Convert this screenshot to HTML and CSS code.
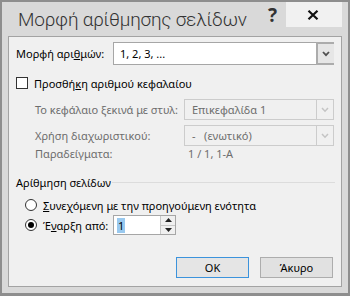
FILE: index.html
```html
<!DOCTYPE html>
<html lang="el">
<head>
<meta charset="utf-8">
<title>Μορφή αρίθμησης σελίδων</title>
<link rel="stylesheet" href="styles.css">
</head>
<body>
<div class="window">
  <div class="titlebar">
    <span class="title">Μορφή αρίθμησης σελίδων</span>
    <span class="help">?</span>
    <span class="close"><svg width="12" height="10" viewBox="0 0 12 10"><path d="M1.5 0.8 L10.5 9.2 M10.5 0.8 L1.5 9.2" stroke="#111" stroke-width="2.2" fill="none"/></svg></span>
  </div>
  <div class="panel">
    <div class="row r-format">
      <span class="lbl">Μορφή αρι<u>θ</u>μών:</span>
      <div class="combo combo-wide">
        <span class="combo-text">1, 2, 3, ...</span>
        <span class="drop"><svg width="8" height="6" viewBox="0 0 8 6"><path d="M1 1 L4 4.2 L7 1" stroke="#505050" stroke-width="1.8" fill="none"/></svg></span>
      </div>
    </div>
    <div class="row r-check">
      <span class="checkbox"></span>
      <span class="lbl">Προσθή<u>κ</u>η αριθμού κεφαλαίου</span>
    </div>
    <div class="row r-sub r-sub1 disabled">
      <span class="sub-lbl">Το κεφάλαιο ξεκινά με στυλ:</span>
      <div class="combo combo-sub">
        <span class="combo-text">Επικεφαλίδα 1</span>
        <span class="drop"><svg width="8" height="6" viewBox="0 0 8 6"><path d="M1 1 L4 4.2 L7 1" stroke="#c4c4c4" stroke-width="1.5" fill="none"/></svg></span>
      </div>
    </div>
    <div class="row r-sub r-sub2 disabled">
      <span class="sub-lbl">Χρήση διαχωριστικού:</span>
      <div class="combo combo-sub">
        <span class="combo-text">-&nbsp;&nbsp;&nbsp;(ενωτικό)</span>
        <span class="drop"><svg width="8" height="6" viewBox="0 0 8 6"><path d="M1 1 L4 4.2 L7 1" stroke="#c4c4c4" stroke-width="1.5" fill="none"/></svg></span>
      </div>
    </div>
    <div class="row r-examples disabled">
      <span class="sub-lbl">Παραδείγματα:</span>
      <span class="example">1 / 1, 1-A</span>
    </div>
    <div class="row r-section">
      <span class="section-title">Αρίθμηση σελίδων</span>
      <span class="section-line"></span>
    </div>
    <div class="row r-radio1">
      <span class="radio"></span>
      <span class="lbl"><u>Σ</u>υνεχόμενη με την προηγούμενη ενότητα</span>
    </div>
    <div class="row r-radio2">
      <span class="radio checked"></span>
      <span class="lbl radio-lbl">Έ<u>ν</u>αρξη από:</span>
      <div class="spinner">
        <span class="spin-text"><span class="sel">1</span></span>
        <span class="spin-btns">
          <span class="spin-up"><svg width="7" height="4" viewBox="0 0 7 4"><path d="M0 4 L3.5 0 L7 4 Z" fill="#222"/></svg></span>
          <span class="spin-down"><svg width="7" height="4" viewBox="0 0 7 4"><path d="M0 0 L3.5 4 L7 0 Z" fill="#222"/></svg></span>
        </span>
      </div>
    </div>
    <div class="row r-buttons">
      <span class="btn btn-ok">OK</span>
      <span class="btn">Άκυρο</span>
    </div>
  </div>
</div>
</body>
</html>
```
FILE: styles.css
```css
* { box-sizing: border-box; }
html, body { margin: 0; padding: 0; background: #d9d9d9; }
body {
  font-family: "Noto Sans", "Open Sans", "DejaVu Sans", sans-serif;
  font-size: 11px;
  color: #000;
}
.window {
  width: 350px;
  height: 296px;
  background: #d9d9d9;
  border: 2px solid #8e8e8e;
  border-bottom-width: 3px;
  padding: 0 6px 6px 6px;
  display: flex;
  flex-direction: column;
  white-space: nowrap;
}
.titlebar {
  height: 34px;
  display: flex;
  align-items: flex-start;
}
.title {
  font-family: Roboto, "Noto Sans", sans-serif;
  font-weight: 300;
  font-size: 19px;
  letter-spacing: -0.2px;
  color: #333;
  margin-left: 10px;
  margin-top: 5px;
  line-height: 26px;
}
.help {
  font-family: "Noto Sans", sans-serif;
  font-weight: 700;
  font-size: 19px;
  color: #333;
  margin-left: auto;
  margin-right: 9px;
  line-height: 26px;
}
.close {
  width: 56px;
  height: 25px;
  background: #f1f1f1;
  display: flex;
  align-items: center;
  justify-content: center;
  padding-right: 3px;
}
.close svg { display: block; }
.panel {
  flex: 1;
  background: #f0f0f0;
  border: 1px solid #a3a3a3;
  padding: 5px 7px 0 7px;
  display: flex;
  flex-direction: column;
}
.row { display: flex; align-items: center; }
.row > * { flex-shrink: 0; }
u { text-decoration: underline; text-underline-offset: 1px; }
.r-format { height: 23px; }
.r-format .lbl { width: 97px; }
.combo {
  display: flex;
  align-items: stretch;
  background: #fff;
  border: 1px solid #a6a6a6;
  height: 100%;
}
.combo-wide { width: 221px; }
.combo-text { flex: 1; padding-left: 6px; display: flex; align-items: center; }
.drop {
  width: 17px;
  border-left: 1px solid #a6a6a6;
  background: #e6e6e6;
  display: flex;
  align-items: center;
  justify-content: center;
}
.combo-wide .drop { border: 2px solid #acacac; border-right: none; margin: -1px -1px -1px 0; width: 18px; }
.drop svg { display: block; }
.r-check { height: 16px; margin-top: 10px; }
.checkbox {
  width: 12px; height: 12px;
  border: 1px solid #333;
  background: #fff;
  margin-right: 6px;
}
.r-sub { height: 21px; padding-left: 19px; }
.r-sub1 { margin-top: 8px; }
.r-sub2 { margin-top: 5px; }
.disabled { color: #6d6d6d; }
.sub-lbl { width: 149px; }
.combo-sub { width: 150px; background: #f0f0f0; border-color: #cccccc; }
.combo-sub .combo-text { padding-left: 7px; }
.combo-sub .drop { background: #f0f0f0; border-left-color: #cccccc; }
.r-examples { height: 14px; padding-left: 19px; }
.example { padding-left: 4px; }
.r-section { height: 16px; margin-top: 14px; }
.section-title { width: 96px; }
.section-line { flex: 1 1 auto !important; height: 1px; background: #dcdcdc; margin-right: -1px; }
.radio {
  width: 12px; height: 12px;
  border: 1px solid #333;
  border-radius: 50%;
  background: #fff;
  margin-left: 9px;
  margin-right: 6px;
  display: flex;
  align-items: center;
  justify-content: center;
}
.radio.checked::after {
  content: "";
  width: 6px; height: 6px;
  border-radius: 50%;
  background: #000;
}
.r-radio1 { height: 16px; margin-top: 7px; }
.r-radio2 { height: 20px; margin-top: 2px; }
.radio-lbl { width: 70px; }
.spinner {
  width: 63px;
  height: 20px;
  display: flex;
  border: 1px solid #a6a6a6;
  background: #fff;
}
.spin-text { flex: 1; display: flex; align-items: center; padding-left: 3px; }
.sel { background: #99c9ef; color: #000; padding: 0 1px; line-height: 15px; }
.spin-btns {
  width: 15px;
  display: flex;
  flex-direction: column;
  border-left: 1px solid #c8c8c8;
  background: #f0f0f0;
}
.spin-up, .spin-down { flex: 1; display: flex; align-items: center; justify-content: center; }
.spin-up { border-bottom: 1px solid #c8c8c8; }
.spin-btns svg { display: block; }
.r-buttons { height: 21px; margin-top: 22px; justify-content: flex-end; gap: 11px; padding-right: 1px; }
.btn {
  width: 73px;
  height: 21px;
  border: 1px solid #adadad;
  background: #e1e1e1;
  display: flex;
  align-items: center;
  justify-content: center;
}
.btn-ok { border-color: #3c93dc; background: #e5e5e5; }
```
